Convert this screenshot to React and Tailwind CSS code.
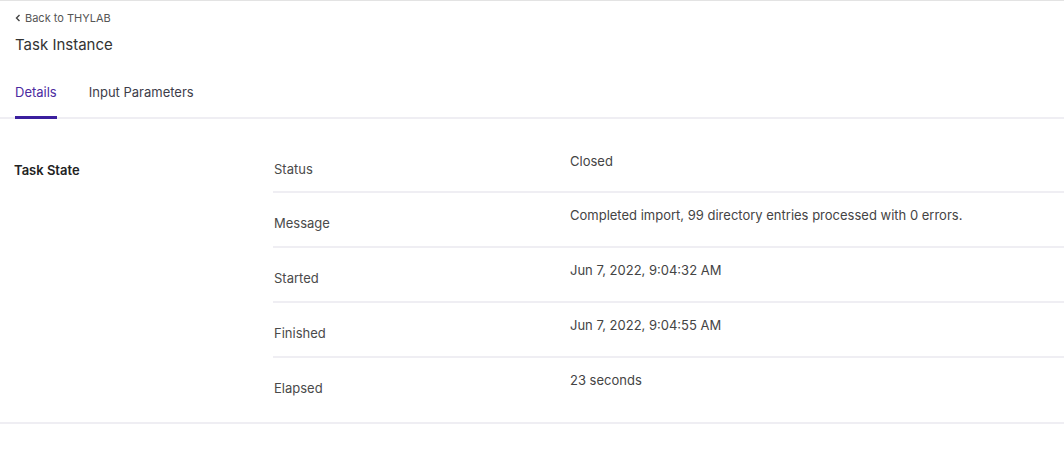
import React from 'react';

const rows = [
  { label: 'Status', value: 'Closed' },
  { label: 'Message', value: 'Completed import, 99 directory entries processed with 0 errors.' },
  { label: 'Started', value: 'Jun 7, 2022, 9:04:32 AM' },
  { label: 'Finished', value: 'Jun 7, 2022, 9:04:55 AM' },
  { label: 'Elapsed', value: '23 seconds' },
];

export default function App() {
  return (
    <div className="w-[1064px] h-[450px] bg-white border-t border-[#e3e3e3] font-['Inter',sans-serif] text-[#3a3a3a]">
      {/* Header */}
      <div className="px-[15px] pt-[9px]">
        <a href="#" className="flex items-center gap-[4px] text-[11px] leading-[16px] text-[#555]">
          <svg className="w-[6px] h-[8px]" viewBox="0 0 6 8" fill="none" stroke="#444" strokeWidth="1.4">
            <path d="M4.5 1 L1.5 4 L4.5 7" />
          </svg>
          Back to THYLAB
        </a>
        <h1 className="mt-[9px] text-[15px] leading-[20px] text-[#333]">Task Instance</h1>
      </div>

      {/* Tabs */}
      <div className="flex gap-[32px] px-[15px] mt-[27px] border-b-2 border-[#efeef3]">
        <button className="pb-[14px] text-[13px] leading-[20px] text-[#4b2aa0] border-b-[3px] border-[#3b1f9e] -mb-[2px]">
          Details
        </button>
        <button className="pb-[14px] text-[13px] leading-[20px] text-[#3d3d4a] border-b-[3px] border-transparent -mb-[2px]">
          Input Parameters
        </button>
      </div>

      {/* Section */}
      <div className="flex pt-[19px] pb-[11px] border-b-2 border-[#efeef3]">
        <div className="w-[273px] pl-[14px] pt-[22px]">
          <h2 className="text-[13px] leading-[20px] font-semibold text-[#222]">Task State</h2>
        </div>
        <div className="flex-1">
          {rows.map((r, i) => (
            <div
              key={r.label}
              className={`flex ${i === 0 ? 'h-[52px] pt-[1px]' : 'h-[53px]'} ${i < rows.length - 1 ? 'border-b-2 border-[#efeef3] box-content' : ''}`}
            >
              <div className="w-[297px] pl-[1px] pt-[20px] text-[13px] leading-[20px] text-[#4a4a4a]">{r.label}</div>
              <div className="flex-1 pt-[12px] text-[13px] leading-[20px] text-[#444]">{r.value}</div>
            </div>
          ))}
        </div>
      </div>
    </div>
  );
}
